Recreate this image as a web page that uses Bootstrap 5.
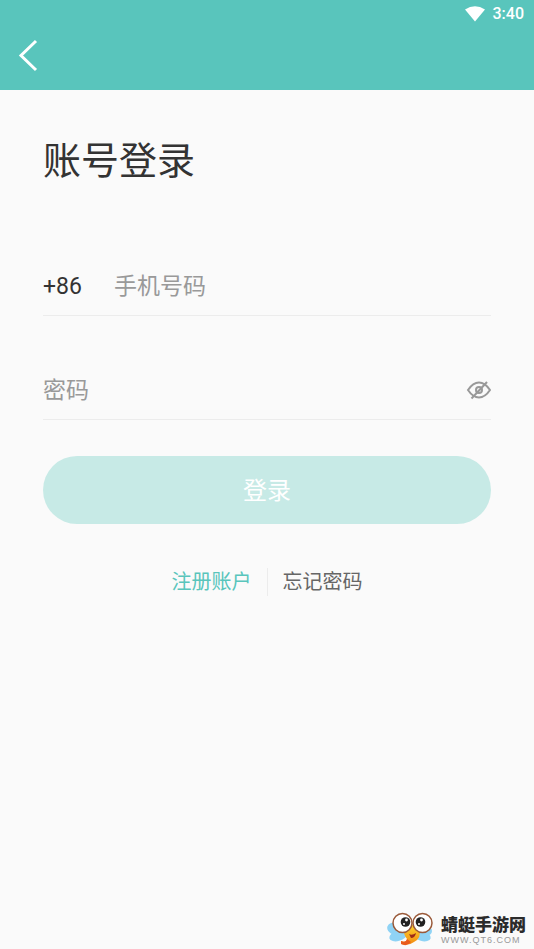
<!DOCTYPE html>
<html lang="zh-CN">
<head>
<meta charset="utf-8">
<meta name="viewport" content="width=device-width, initial-scale=1">
<title>账号登录</title>
<link href="https://cdn.jsdelivr.net/npm/bootstrap@5.3.0/dist/css/bootstrap.min.css" rel="stylesheet">
<style>
body{font-family:Roboto,"Noto Sans CJK SC",sans-serif;background:#fafafa;color:#333}
.top-bar{background:#59c5bc;height:90px}
.status-row{height:28px;font-size:16px;line-height:28px;padding-right:10px;gap:8px}
.back-btn{margin:10px 0 0 18px;line-height:0}
.login-main{padding:0 43px}
.page-title{font-size:38px;line-height:56px;margin:43px 0 67px}
.field-row{height:60px;padding-top:2px;border-bottom:1px solid #ececec;font-size:23px}
.field-row + .field-row{margin-top:44px}
.dial-code{width:71px;padding-top:2px}
.field-input,.field-input:focus{height:44px;font-size:23px;line-height:44px;background:transparent;color:#333}
.field-input::placeholder{color:#999;opacity:1}
.login-btn{--bs-btn-bg:#c7eae6;--bs-btn-color:#fff;--bs-btn-hover-bg:#b5e3de;--bs-btn-hover-color:#fff;font-size:24px;height:68px;padding:8px 0 6px;margin-top:36px}
.link-row{font-size:20px;line-height:28px;margin-top:44px;gap:15px}
.link-register{color:#59c5bc}
.link-forgot{color:#666}
.link-divider{width:1px;background:#ececec}
.site-mark{padding-right:8px;gap:8px;height:40px}
.site-name{font-size:17px;line-height:20px;font-weight:900;color:#2b2b2b;padding-top:2px}
.site-url{font-family:"Liberation Sans",Arial,sans-serif;font-size:9px;line-height:10px;letter-spacing:1px;color:#999}
</style>
<script src="https://cdn.jsdelivr.net/npm/bootstrap@5.3.0/dist/js/bootstrap.bundle.min.js" defer></script>
</head>
<body class="min-vh-100 d-flex flex-column">
<header class="top-bar">
  <div class="status-row d-flex justify-content-end align-items-center text-white">
    <svg width="20" height="16" viewBox="0 0 20 16" aria-hidden="true"><path d="M0 3.500Q10-3 20 3.500L10 15.500Z" fill="#fff"/></svg>
    <span class="fw-medium">3:40</span>
  </div>
  <button type="button" class="back-btn btn p-0 border-0 d-block" aria-label="返回">
    <svg width="20" height="34" viewBox="0 0 20 34" fill="none" stroke="#fff" stroke-width="3"><path d="M18 3 3 17.500 18 32"/></svg>
  </button>
</header>
<main class="login-main flex-grow-1">
  <h1 class="page-title fw-normal">账号登录</h1>
  <form>
    <div class="field-row d-flex align-items-center">
      <label for="phone" class="dial-code flex-shrink-0">+86</label>
      <input id="phone" type="tel" class="field-input form-control border-0 shadow-none p-0" placeholder="手机号码">
    </div>
    <div class="field-row d-flex align-items-center">
      <input id="password" type="password" class="field-input form-control border-0 shadow-none p-0" placeholder="密码" aria-label="密码">
      <button type="button" class="btn p-0 border-0 d-flex" aria-label="显示密码">
        <svg width="25" height="20" viewBox="0 0 25 20" fill="none" stroke="#999" stroke-width="2"><path d="M2 9Q7 1.500 13 1.500T24 9Q19 16.500 13 16.500T2 9Z"/><circle cx="13" cy="9" r="3"/><path d="M21 1 5.500 17.500"/></svg>
      </button>
    </div>
    <button type="submit" class="login-btn btn rounded-pill border-0 w-100">登录</button>
  </form>
  <nav class="link-row d-flex justify-content-center" aria-label="账号">
    <a href="#" class="link-register text-decoration-none">注册账户</a>
    <span class="link-divider"></span>
    <a href="#" class="link-forgot text-decoration-none">忘记密码</a>
  </nav>
</main>
<footer class="site-mark d-flex justify-content-end align-items-center">
  <svg width="46" height="36" viewBox="0 0 46 36" aria-hidden="true">
    <defs><linearGradient id="dragonfly-body" x1="0" y1="0" x2="0" y2="1"><stop offset="0" stop-color="#ffd52e"/><stop offset="1" stop-color="#f28a12"/></linearGradient></defs>
    <g fill="#8fd3f5"><ellipse cx="8" cy="18" rx="8" ry="6" transform="rotate(20 8 18)"/><ellipse cx="11" cy="25" rx="9" ry="5" transform="rotate(-15 11 25)"/><ellipse cx="39" cy="20" rx="6" ry="5"/><ellipse cx="35" cy="25" rx="9" ry="5" transform="rotate(15 35 25)"/></g>
    <path d="M18 15Q25 11 32 17 35 27 27 31 22 35 14 33L14 30Q20 32 20 28 15 22 18 15Z" fill="url(#dragonfly-body)"/>
    <path d="M14 30Q19 32 20 28L24 31Q20 36 14 33Z" fill="#e95b1b"/>
    <path d="M22 23Q25 25 29 22 28 27 24 27Z" fill="#9e2c18"/>
    <g fill="#fff" stroke="#9a5a3a" stroke-width="1.500"><circle cx="15.500" cy="12" r="9.500"/><circle cx="35.500" cy="12" r="9.500"/></g>
    <g fill="#222"><circle cx="18.500" cy="11" r="4.800"/><circle cx="33.500" cy="11" r="4.800"/></g>
    <g fill="#fff"><circle cx="19.500" cy="9" r="1.400"/><circle cx="34.500" cy="9" r="1.400"/><circle cx="17" cy="13" r="1"/><circle cx="32" cy="13" r="1"/></g>
  </svg>
  <div>
    <div class="site-name">蜻蜓手游网</div>
    <div class="site-url">WWW.QT6.COM</div>
  </div>
</footer>
</body>
</html>
